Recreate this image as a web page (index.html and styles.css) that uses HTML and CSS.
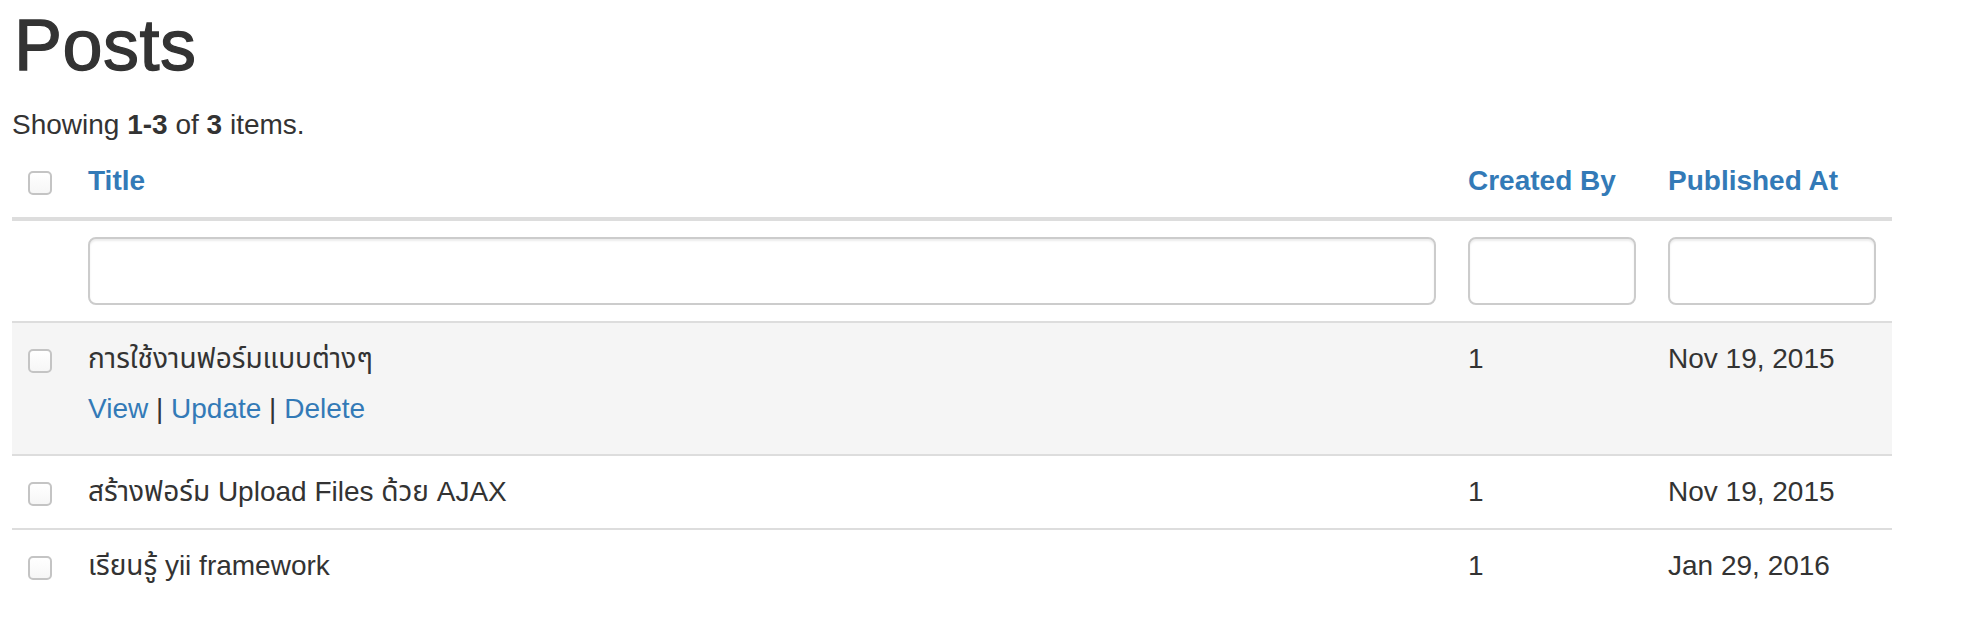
FILE: index.html
```html
<!DOCTYPE html>
<html lang="th">
<head>
<meta charset="utf-8">
<title>Posts</title>
<link rel="stylesheet" href="styles.css">
</head>
<body>
<div class="page">
  <h1 class="title">Posts</h1>
  <div class="summary">Showing <b>1-3</b> of <b>3</b> items.</div>
  <table class="grid">
    <thead>
      <tr class="head-row">
        <th class="col-check"><input type="checkbox" class="check"></th>
        <th><a href="#" class="sort">Title</a></th>
        <th class="col-created"><a href="#" class="sort">Created By</a></th>
        <th class="col-published"><a href="#" class="sort">Published At</a></th>
      </tr>
      <tr class="filter-row">
        <td class="col-check"></td>
        <td><input type="text" class="field"></td>
        <td class="col-created"><input type="text" class="field"></td>
        <td class="col-published"><input type="text" class="field"></td>
      </tr>
    </thead>
    <tbody>
      <tr class="row is-hover">
        <td class="col-check"><input type="checkbox" class="check"></td>
        <td>
          <div class="post-title">การใช้งานฟอร์มแบบต่างๆ</div>
          <div class="actions"><a href="#">View</a> | <a href="#">Update</a> | <a href="#">Delete</a></div>
        </td>
        <td>1</td>
        <td>Nov 19, 2015</td>
      </tr>
      <tr class="row">
        <td class="col-check"><input type="checkbox" class="check"></td>
        <td><div class="post-title">สร้างฟอร์ม Upload Files ด้วย AJAX</div></td>
        <td>1</td>
        <td>Nov 19, 2015</td>
      </tr>
      <tr class="row">
        <td class="col-check"><input type="checkbox" class="check"></td>
        <td><div class="post-title">เรียนรู้ yii framework</div></td>
        <td>1</td>
        <td>Jan 29, 2016</td>
      </tr>
    </tbody>
  </table>
</div>
</body>
</html>
```
FILE: styles.css
```css
* {
  box-sizing: border-box;
}

html, body {
  margin: 0;
  padding: 0;
  background: #fff;
}

body {
  font-family: "Liberation Sans", "Noto Sans Thai", "Noto Sans", "DejaVu Sans", sans-serif;
  font-size: 28px;
  line-height: 40px;
  color: #333;
}

.page {
  width: 1880px;
  margin-left: 12px;
  padding-top: 6px;
}

.title {
  margin: 0 0 20px;
  padding-left: 2px;
  font-size: 72px;
  line-height: 79px;
  font-weight: 400;
  color: #333;
  -webkit-text-stroke: 1.3px #333;
  letter-spacing: 0.5px;
}

.summary {
  height: 40px;
}

.summary b {
  font-weight: 700;
}

.grid {
  width: 1880px;
  table-layout: fixed;
  border-collapse: separate;
  border-spacing: 0;
}

.grid th,
.grid td {
  padding: 16px;
  text-align: left;
  vertical-align: top;
}

.grid th {
  border-bottom: 4px solid #ddd;
  font-weight: 700;
}

.col-check {
  width: 60px;
}

.col-created {
  width: 200px;
}

.col-published {
  width: 240px;
}

.grid a {
  color: #337ab7;
  text-decoration: none;
}

.sort {
  font-weight: 700;
}

.check {
  -webkit-appearance: none;
  appearance: none;
  display: block;
  width: 24px;
  height: 24px;
  margin: 10px 0 0;
  border: 2px solid #c4c4c4;
  border-radius: 5px;
  background: linear-gradient(#fff, #f6f6f6);
}

.field {
  display: block;
  width: 100%;
  height: 68px;
  padding: 12px 24px;
  font: inherit;
  color: #555;
  background: #fff;
  border: 2px solid #ccc;
  border-radius: 8px;
  box-shadow: inset 0 2px 2px rgba(0, 0, 0, 0.075);
}

.row td {
  border-top: 2px solid #ddd;
}

.is-hover {
  background: #f5f5f5;
}

.actions {
  margin: 10px 0 9px;
}
```
